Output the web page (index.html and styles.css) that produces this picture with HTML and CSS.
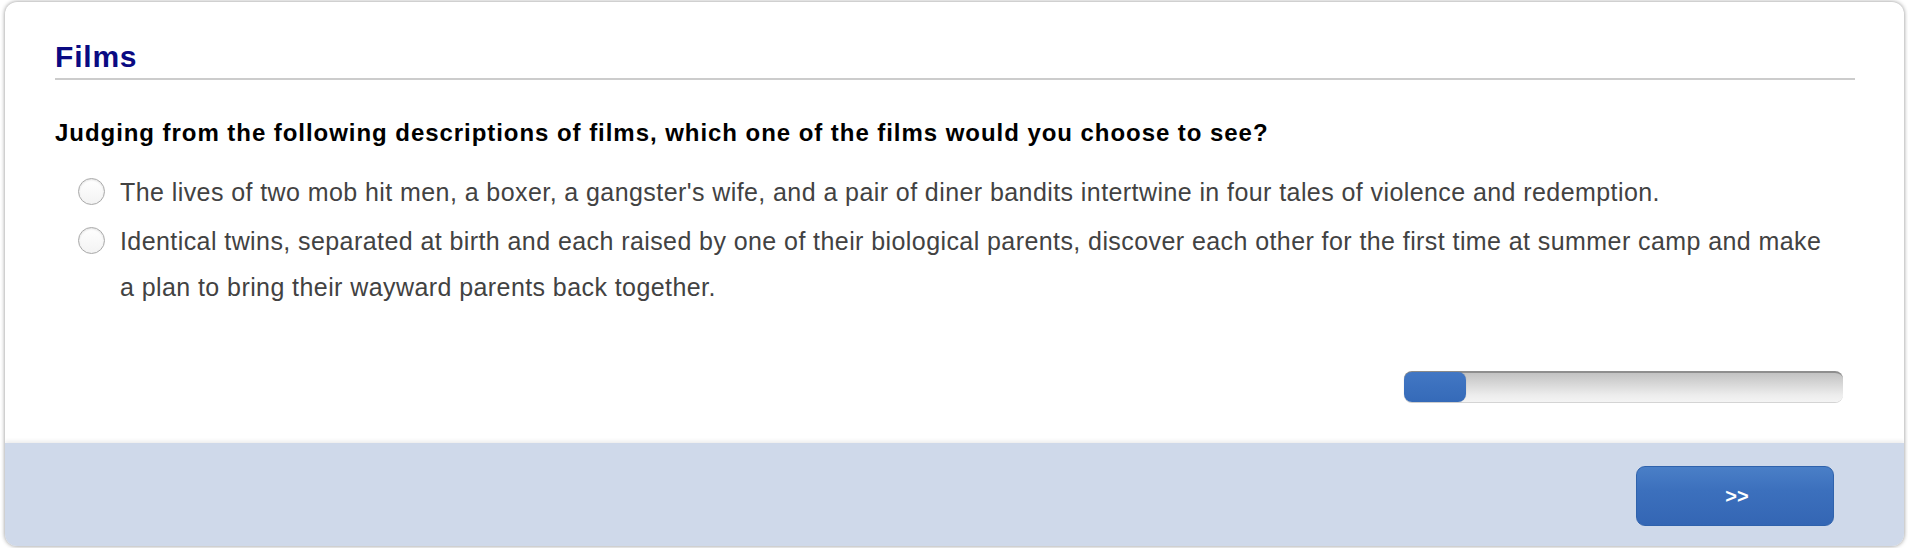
FILE: index.html
```html
<!DOCTYPE html>
<html lang="en">
<head>
<meta charset="utf-8">
<title>Films</title>
<link rel="stylesheet" href="styles.css">
</head>
<body>
<div class="card">
  <div class="content">
    <h1 class="title">Films</h1>
    <p class="question">Judging from the following descriptions of films, which one of the films would you choose to see?</p>
    <ul class="options">
      <li class="option"><span class="radio"></span><span class="label">The lives of two mob hit men, a boxer, a gangster's wife, and a pair of diner bandits intertwine in four tales of violence and redemption.</span></li>
      <li class="option"><span class="radio"></span><span class="label">Identical twins, separated at birth and each raised by one of their biological parents, discover each other for the first time at summer camp and make a plan to bring their wayward parents back together.</span></li>
    </ul>
    <div class="progress-row">
      <div class="progress"><div class="progress-fill"></div></div>
    </div>
  </div>
  <div class="footer">
    <button class="next" type="button">&gt;&gt;</button>
  </div>
</div>
</body>
</html>
```

FILE: styles.css
```css
html, body {
  margin: 0;
  padding: 0;
  background: #ffffff;
}
body {
  font-family: "Liberation Sans", Arial, sans-serif;
  padding: 2px 4px 2px 5px;
}
.card {
  height: 544px;
  border-radius: 12px;
  background: #ffffff;
  box-shadow: 0 0 4px rgba(0, 0, 0, 0.45);
  display: flex;
  flex-direction: column;
  overflow: hidden;
}
.content {
  flex: 1;
  padding: 37px 49px 0 50px;
  display: flex;
  flex-direction: column;
}
.title {
  margin: 0;
  font-size: 30px;
  line-height: 36px;
  font-weight: bold;
  letter-spacing: 0.8px;
  color: #0a0a82;
  padding-bottom: 3px;
  border-bottom: 2px solid #cccccc;
}
.question {
  margin: 39px 0 0 0;
  font-size: 24px;
  line-height: 28px;
  font-weight: bold;
  letter-spacing: 0.95px;
  color: #000000;
}
.options {
  list-style: none;
  margin: 22px 0 0 0;
  padding: 0;
  display: flex;
  flex-direction: column;
  gap: 3px;
}
.option {
  display: flex;
  align-items: flex-start;
  font-size: 25px;
  line-height: 46px;
  letter-spacing: 0.42px;
  color: #424242;
}
.radio {
  flex: none;
  width: 25px;
  height: 25px;
  margin: 9px 15px 0 23px;
  border-radius: 50%;
  border: 1px solid #a9a9a9;
  background: linear-gradient(#ffffff, #f3f3f3);
  box-shadow: inset 0 1px 2px rgba(0, 0, 0, 0.12);
}
.label {
  flex: 1;
  padding-right: 22px;
}
.progress-row {
  display: flex;
  justify-content: flex-end;
  margin-top: 61px;
  padding-right: 12px;
}
.progress {
  width: 439px;
  height: 31px;
  box-sizing: border-box;
  border-radius: 8px;
  border-top: 2px solid #8e8e8e;
  background: linear-gradient(#c2c2c2, #ececec 75%, #f4f4f4);
  box-shadow: 0 1px 0 #d4d4d4;
  display: flex;
}
.progress-fill {
  width: 62px;
  margin-top: -1px;
  height: 30px;
  border-radius: 8px;
  background: linear-gradient(#4277c4, #356ab8);
  box-shadow: 0 0 1px rgba(0, 0, 0, 0.3);
}
.footer {
  height: 103px;
  background: #cfd9ea;
  box-shadow: 0 -2px 4px rgba(0, 0, 0, 0.08);
  display: flex;
  justify-content: flex-end;
  align-items: flex-start;
  padding: 23px 70px 0 0;
  box-sizing: border-box;
}
.next {
  width: 198px;
  height: 60px;
  border-radius: 9px;
  border: 1px solid #2f62ac;
  background: linear-gradient(#4a7fc7, #3c70bd 40%, #3466b4);
  color: #ffffff;
  font-family: "Liberation Sans", Arial, sans-serif;
  font-weight: bold;
  font-size: 20px;
  padding: 0 0 0 4px;
  cursor: pointer;
}
```
